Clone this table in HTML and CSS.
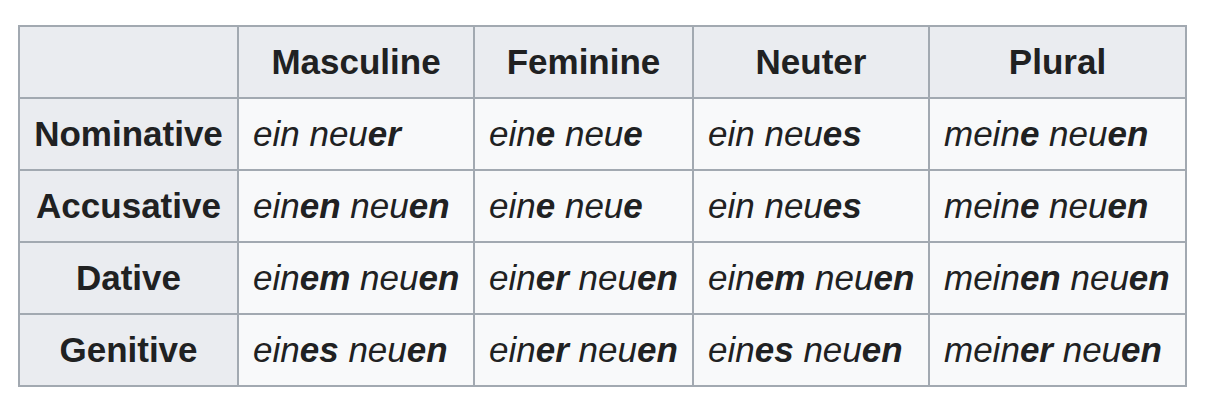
FILE: index.html
```html
<!DOCTYPE html>
<html lang="en">
<head>
<meta charset="utf-8">
<title>German adjective declension</title>
<link rel="stylesheet" href="styles.css">
</head>
<body>
<table class="wikitable">
  <colgroup>
    <col class="c-case">
    <col class="c-m">
    <col class="c-f">
    <col class="c-n">
    <col class="c-p">
  </colgroup>
  <thead>
    <tr>
      <th></th>
      <th>Masculine</th>
      <th>Feminine</th>
      <th>Neuter</th>
      <th>Plural</th>
    </tr>
  </thead>
  <tbody>
    <tr>
      <th>Nominative</th>
      <td>ein neu<b>er</b></td>
      <td>ein<b>e</b> neu<b>e</b></td>
      <td>ein neu<b>es</b></td>
      <td>mein<b>e</b> neu<b>en</b></td>
    </tr>
    <tr>
      <th>Accusative</th>
      <td>ein<b>en</b> neu<b>en</b></td>
      <td>ein<b>e</b> neu<b>e</b></td>
      <td>ein neu<b>es</b></td>
      <td>mein<b>e</b> neu<b>en</b></td>
    </tr>
    <tr>
      <th>Dative</th>
      <td>ein<b>em</b> neu<b>en</b></td>
      <td>ein<b>er</b> neu<b>en</b></td>
      <td>ein<b>em</b> neu<b>en</b></td>
      <td>mein<b>en</b> neu<b>en</b></td>
    </tr>
    <tr>
      <th>Genitive</th>
      <td>ein<b>es</b> neu<b>en</b></td>
      <td>ein<b>er</b> neu<b>en</b></td>
      <td>ein<b>es</b> neu<b>en</b></td>
      <td>mein<b>er</b> neu<b>en</b></td>
    </tr>
  </tbody>
</table>
</body>
</html>
```

FILE: styles.css
```css
html, body {
  margin: 0;
  padding: 0;
  background: #ffffff;
}

body {
  padding: 25px 0 0 18px;
  font-family: "Liberation Sans", Arial, sans-serif;
  color: #202122;
}

.wikitable {
  border-collapse: collapse;
  table-layout: fixed;
  width: 1167px;
  font-size: 35px;
  background: #f8f9fa;
  border: 2px solid #a2a9b1;
}

.c-case { width: 219px; }
.c-m { width: 236px; }
.c-f { width: 219px; }
.c-n { width: 236px; }
.c-p { width: 257px; }

.wikitable th,
.wikitable td {
  border: 2px solid #a2a9b1;
  height: 72px;
  padding: 0 14px;
  box-sizing: border-box;
  vertical-align: middle;
  white-space: nowrap;
}

.wikitable th {
  background: #eaecf0;
  font-weight: bold;
  text-align: center;
}

.wikitable td {
  font-style: italic;
  text-align: left;
}

.wikitable td b {
  font-weight: bold;
}
```
